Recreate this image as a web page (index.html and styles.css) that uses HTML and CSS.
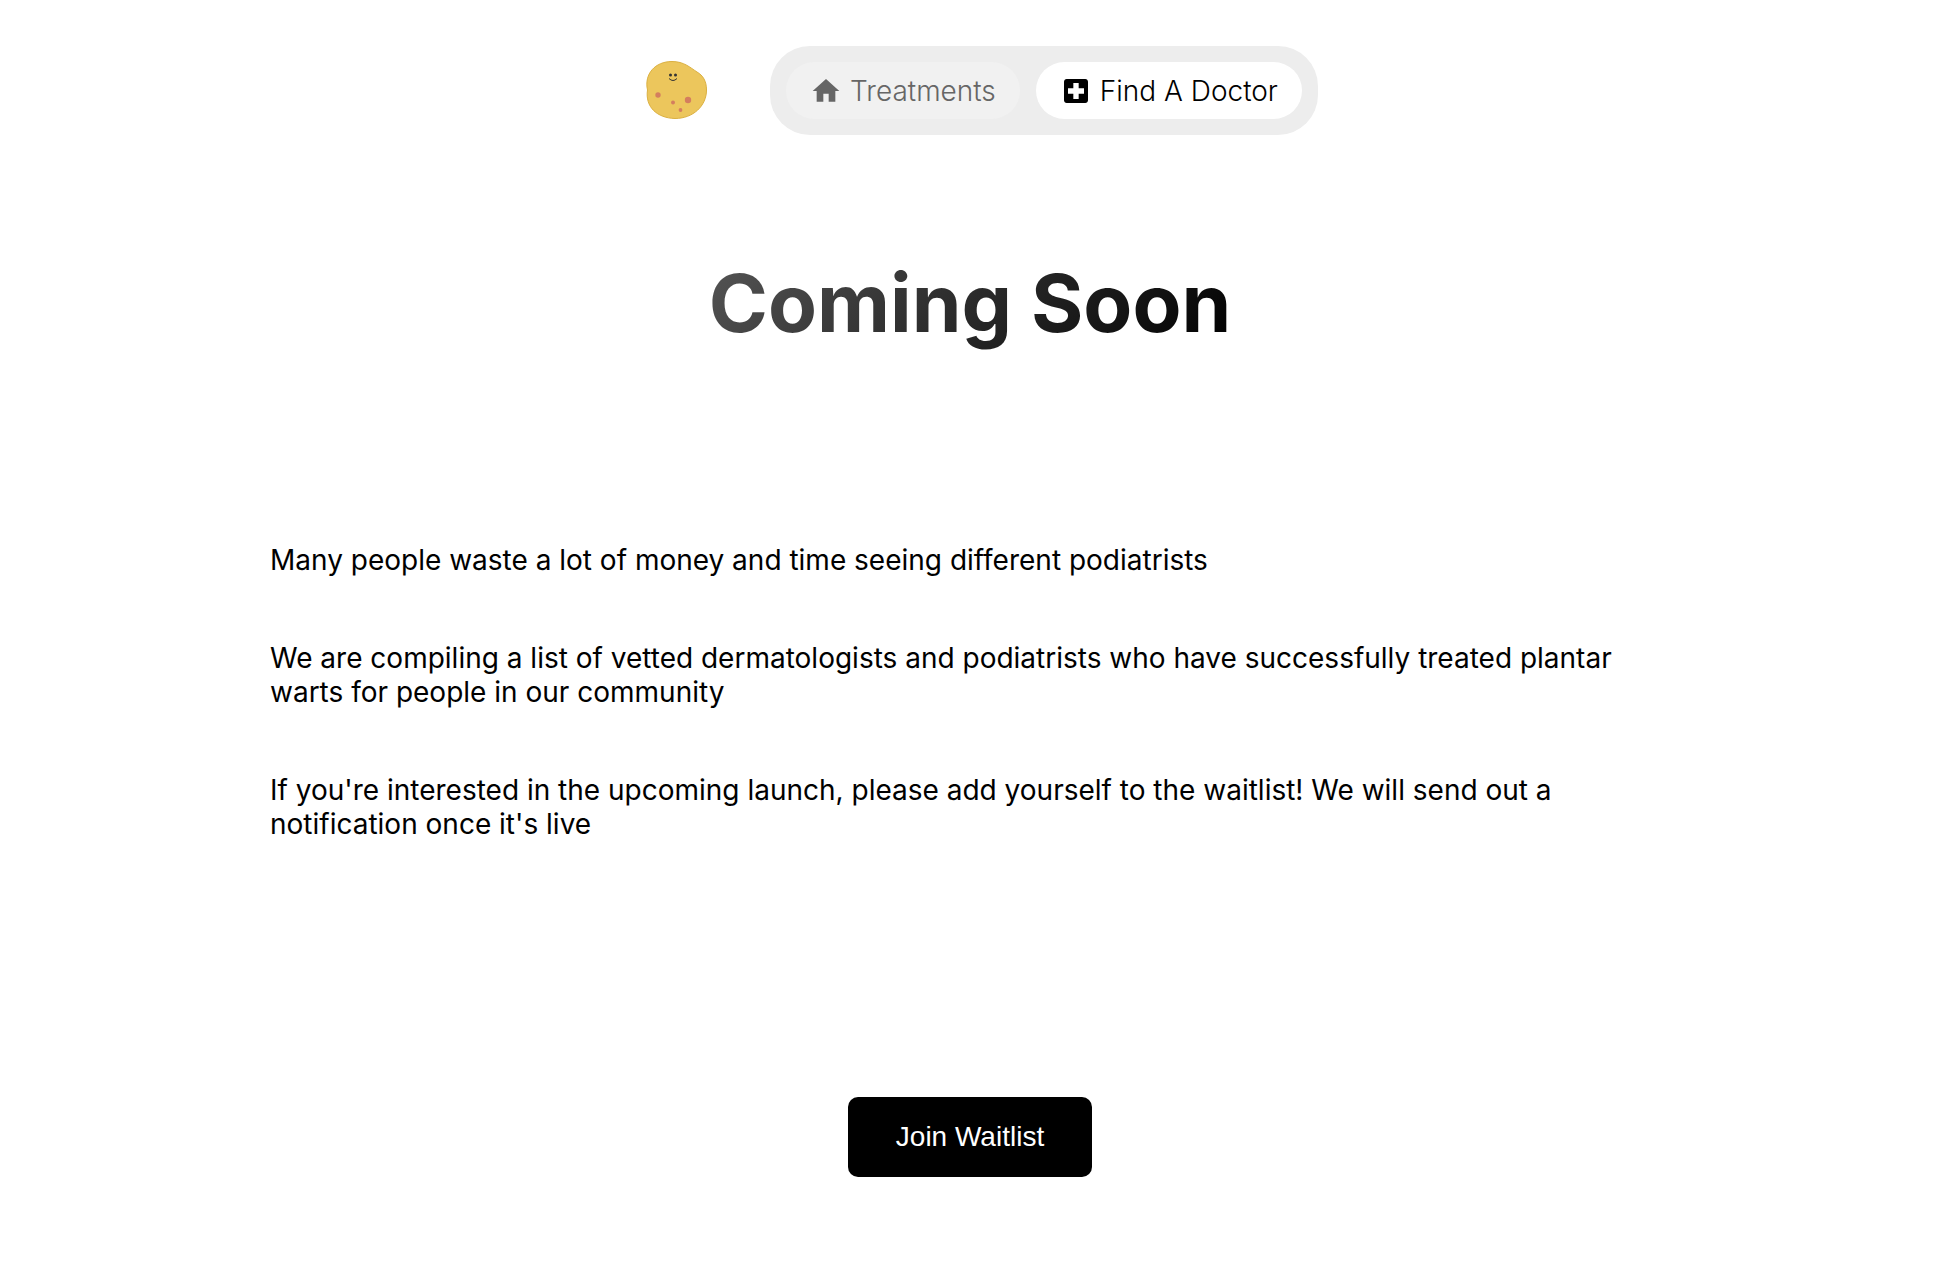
FILE: index.html
```html
<!DOCTYPE html>
<html lang="en">

<head>
<meta charset="UTF-8">
<meta name="viewport" content="width=device-width, initial-scale=1.0">
<title>Find A Doctor</title>
<link rel="stylesheet" href="styles.css">
</head>

<body>

<header class="header">
  <a class="logo" href="#" aria-label="Home">
    <svg viewBox="-8 0 100 100" width="100" height="100">
      <path d="M17.500 50C14 34 25 21.500 42 21.500C54 21.500 60 27.500 67 32C73 35.500 76.500 41 76.500 50C76.500 66 63 78.500 45 78.500C27 78 15 67 17.500 50Z" fill="#ecc65c" stroke="#dbb041"/>
      <circle cx="40.500" cy="35" r="1.500" fill="#333"/>
      <circle cx="45.500" cy="35" r="1.500" fill="#333"/>
      <path d="M39 38.500Q43 42.500 47 38.500" fill="none" stroke="#333"/>
      <circle cx="28" cy="55" r="2.700" fill="#d47e5e"/>
      <circle cx="58" cy="60" r="3.200" fill="#d47e5e"/>
      <circle cx="43" cy="62.500" r="2" fill="#d47e5e"/>
      <circle cx="50.500" cy="70" r="1.900" fill="#d47e5e"/>
    </svg>
  </a>
  <nav class="nav">
    <a class="tab" href="#">
      <svg class="icon" viewBox="0 0 24 24"><path d="M10 20v-6h4v6h5v-8h3L12 3 2 12h3v8z"/></svg>
      Treatments
    </a>
    <a class="tab active" href="#">
      <svg class="icon" viewBox="0 0 24 24"><path d="M19 3H5c-1.100 0-1.990.9-1.990 2L3 19c0 1.100.9 2 2 2h14c1.100 0 2-.9 2-2V5c0-1.100-.9-2-2-2zm-1 11h-4v4h-4v-4H6v-4h4V6h4v4h4v4z"/></svg>
      Find A Doctor
    </a>
  </nav>
</header>

<main class="main">
  <h1 class="title">Coming Soon</h1>

  <div class="text">
    <p>Many people waste a lot of money and time seeing different podiatrists</p>
    <p>We are compiling a list of vetted dermatologists and podiatrists who have successfully treated plantar warts for people in our community</p>
    <p>If you're interested in the upcoming launch, please add yourself to the waitlist! We will send out a notification once it's live</p>
  </div>

  <button class="join" type="button">Join Waitlist</button>
</main>

</body>

</html>
```

FILE: styles.css
```css
* {
  box-sizing: border-box;
  margin: 0;
  padding: 0;
}

body {
  padding: 40px 10px 40px 0;
  background: #fff;
  color: #000;
  font-family: Inter, sans-serif;
  font-size: 28px;
  line-height: 34px;
}

.header {
  display: flex;
  justify-content: center;
  align-items: center;
  gap: 48px;
}

.logo {
  display: flex;
}

.nav {
  display: flex;
  gap: 16px;
  padding: 16px;
  border-radius: 40px;
  background: #ededed;
}

.tab {
  display: flex;
  align-items: center;
  gap: 8px;
  padding: 12px 24px 11px;
  border-radius: 30px;
  background: #f1f1f1;
  color: #666;
  font-weight: 300;
  text-decoration: none;
}

.tab.active {
  background: #fff;
  color: #000;
}

.icon {
  width: 32px;
  height: 32px;
  fill: currentColor;
}

.main {
  display: flex;
  flex-direction: column;
  align-items: center;
}

.title {
  margin-top: 115px;
  font-size: 80px;
  line-height: 96px;
  font-weight: 700;
  background: linear-gradient(135deg, #555, #000);
  -webkit-background-clip: text;
  background-clip: text;
  color: transparent;
}

.text {
  display: flex;
  flex-direction: column;
  gap: 64px;
  width: 100%;
  max-width: 1400px;
  margin-top: 192px;
}

.join {
  height: 80px;
  margin-top: 256px;
  padding: 0 48px;
  border: none;
  border-radius: 10px;
  background: #000;
  color: #fff;
  font-family: "Liberation Sans", Arial, sans-serif;
  font-size: 28px;
  cursor: pointer;
}
```
